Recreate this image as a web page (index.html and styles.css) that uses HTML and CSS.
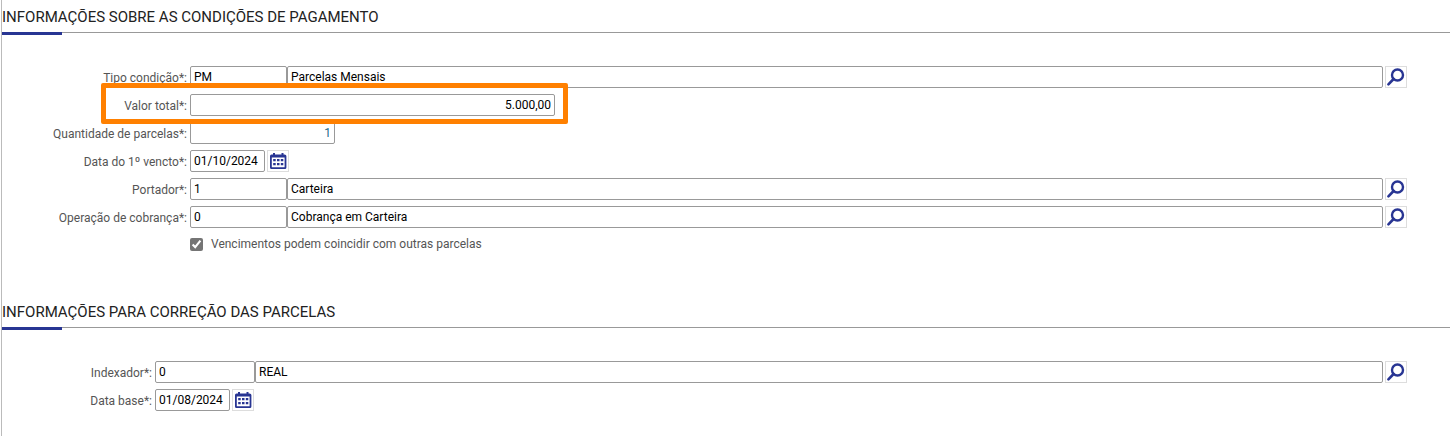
FILE: index.html
```html
<!DOCTYPE html>
<html lang="pt-BR">
<head>
    <meta charset="UTF-8">
    <meta name="viewport" content="width=device-width, initial-scale=1.0">
    <title>Condições de pagamento</title>
    <link rel="stylesheet" href="styles.css">
</head>
<body>
    <svg class="sprite" aria-hidden="true">
        <symbol id="icon-search" viewBox="0 0 20 20">
            <circle cx="11.5" cy="8" r="5.5" fill="none" stroke="#283593" stroke-width="2.4"/>
            <path d="M7.6 12L2.4 17.4" fill="none" stroke="#283593" stroke-width="2.6" stroke-linecap="round"/>
        </symbol>
        <symbol id="icon-calendar" viewBox="0 0 20 20">
            <path d="M3.5 3.5H16.5Q18.4 3.5 18.4 5V16.5Q18.4 18 17 18H3.4Q2 18 2 16.5V5Q2 3.5 3.5 3.5ZM3.8 6.4V16.2H16.6V6.4Z" fill="#283593" fill-rule="evenodd"/>
            <path d="M5 2H7V4H5ZM13.5 2H15.5V4H13.5Z" fill="#283593"/>
            <path d="M5.2 8H7.7V10.3H5.2ZM9 8H11.5V10.3H9ZM12.8 8H15.3V10.3H12.8ZM5.2 12H7.7V14.3H5.2ZM9 12H11.5V14.3H9ZM12.8 12H15.3V14.3H12.8Z" fill="#283593"/>
        </symbol>
    </svg>
    <form class="page">
        <section class="section">
            <h2>INFORMAÇÕES SOBRE AS CONDIÇÕES DE PAGAMENTO</h2>
            <div class="fields">
                <div class="row">
                    <label for="tipo">Tipo condição*:</label>
                    <div class="lookup">
                        <input class="code" type="text" id="tipo" value="PM">
                        <input class="description" type="text" aria-label="Descrição do tipo de condição" value="Parcelas Mensais">
                    </div>
                    <button class="icon-button" type="button" aria-label="Pesquisar tipo de condição"><svg><use href="#icon-search"/></svg></button>
                </div>
                <div class="row highlight">
                    <label for="valor">Valor total*:</label>
                    <input class="amount" type="text" id="valor" value="5.000,00">
                </div>
                <div class="row">
                    <label for="quantidade">Quantidade de parcelas*:</label>
                    <input class="quantity" type="text" id="quantidade" value="1">
                </div>
                <div class="row">
                    <label for="vencimento">Data do 1º vencto*:</label>
                    <input class="date" type="text" id="vencimento" value="01/10/2024">
                    <button class="icon-button" type="button" aria-label="Escolher data do vencimento"><svg><use href="#icon-calendar"/></svg></button>
                </div>
                <div class="row">
                    <label for="portador">Portador*:</label>
                    <div class="lookup">
                        <input class="code" type="text" id="portador" value="1">
                        <input class="description" type="text" aria-label="Descrição do portador" value="Carteira">
                    </div>
                    <button class="icon-button" type="button" aria-label="Pesquisar portador"><svg><use href="#icon-search"/></svg></button>
                </div>
                <div class="row">
                    <label for="operacao">Operação de cobrança*:</label>
                    <div class="lookup">
                        <input class="code" type="text" id="operacao" value="0">
                        <input class="description" type="text" aria-label="Descrição da operação de cobrança" value="Cobrança em Carteira">
                    </div>
                    <button class="icon-button" type="button" aria-label="Pesquisar operação de cobrança"><svg><use href="#icon-search"/></svg></button>
                </div>
                <div class="check-row">
                    <input type="checkbox" id="coincidir" checked>
                    <label for="coincidir">Vencimentos podem coincidir com outras parcelas</label>
                </div>
            </div>
        </section>
        <section class="section correction">
            <h2>INFORMAÇÕES PARA CORREÇÃO DAS PARCELAS</h2>
            <div class="fields">
                <div class="row">
                    <label for="indexador">Indexador*:</label>
                    <div class="lookup">
                        <input class="code" type="text" id="indexador" value="0">
                        <input class="description" type="text" aria-label="Descrição do indexador" value="REAL">
                    </div>
                    <button class="icon-button" type="button" aria-label="Pesquisar indexador"><svg><use href="#icon-search"/></svg></button>
                </div>
                <div class="row">
                    <label for="data-base">Data base*:</label>
                    <input class="date" type="text" id="data-base" value="01/08/2024">
                    <button class="icon-button" type="button" aria-label="Escolher data base"><svg><use href="#icon-calendar"/></svg></button>
                </div>
            </div>
        </section>
    </form>
</body>
</html>
```

FILE: styles.css
```css
* {
    box-sizing: border-box;
}
body {
    margin: 0;
    background: #fff;
    color: #555;
    font-family: Roboto, "Liberation Sans", sans-serif;
    font-size: 12px;
}
.sprite {
    display: none;
}
.page {
    min-height: 100vh;
    margin-left: 1px;
    border-left: 1px solid #bbb;
}
.section {
    --label-width: 188px;
    --code-width: 97px;
    padding-bottom: 41px;
}
.correction {
    --label-width: 153px;
    --code-width: 100px;
    padding-bottom: 0;
}
h2 {
    position: relative;
    margin: 0;
    padding: 7px 0 5px;
    border-bottom: 1px solid #999;
    color: #222;
    font-size: 15px;
    font-weight: 400;
    line-height: 20px;
}
h2::after {
    content: "";
    position: absolute;
    left: 0;
    top: 100%;
    width: 60px;
    height: 3px;
    background: #283593;
}
.fields {
    display: flex;
    flex-direction: column;
    gap: 6px;
    padding: 33px 43px 0 0;
}
.row {
    display: flex;
    align-items: center;
}
.row label {
    width: var(--label-width);
    flex: none;
    padding: 2px 3px 0 0;
    text-align: right;
    white-space: nowrap;
}
.lookup {
    display: flex;
    flex: 1;
}
input[type="text"] {
    height: 22px;
    min-width: 0;
    margin: 0;
    padding: 0 3px;
    border: 1px solid #999;
    border-radius: 2px;
    background: #fff;
    color: #000;
    font: inherit;
}
.row .code {
    width: var(--code-width);
}
.row .description {
    flex: 1;
}
.row .amount {
    width: 365px;
    text-align: right;
}
.row .quantity {
    width: 145px;
    color: #1c6a8c;
    text-align: right;
}
.row .date {
    width: 75px;
}
.icon-button {
    width: 22px;
    height: 22px;
    flex: none;
    margin: 0 0 0 2px;
    padding: 0;
    border: 1px solid #ddd;
    background: #fff;
    cursor: pointer;
}
.icon-button svg {
    display: block;
    width: 20px;
    height: 20px;
}
/* orange frame drawn over the neighbouring rows */
.highlight {
    position: relative;
}
.highlight::after {
    content: "";
    position: absolute;
    box-sizing: border-box;
    left: 99px;
    top: -11px;
    width: 467px;
    height: 41px;
    border: 5px solid #ff8000;
    border-radius: 2px;
    pointer-events: none;
}
.check-row {
    display: flex;
    align-items: center;
    gap: 8px;
    height: 20px;
    padding-left: 188px;
}
.check-row input {
    width: 13px;
    height: 13px;
    margin: 0;
    accent-color: #757575;
}
```
